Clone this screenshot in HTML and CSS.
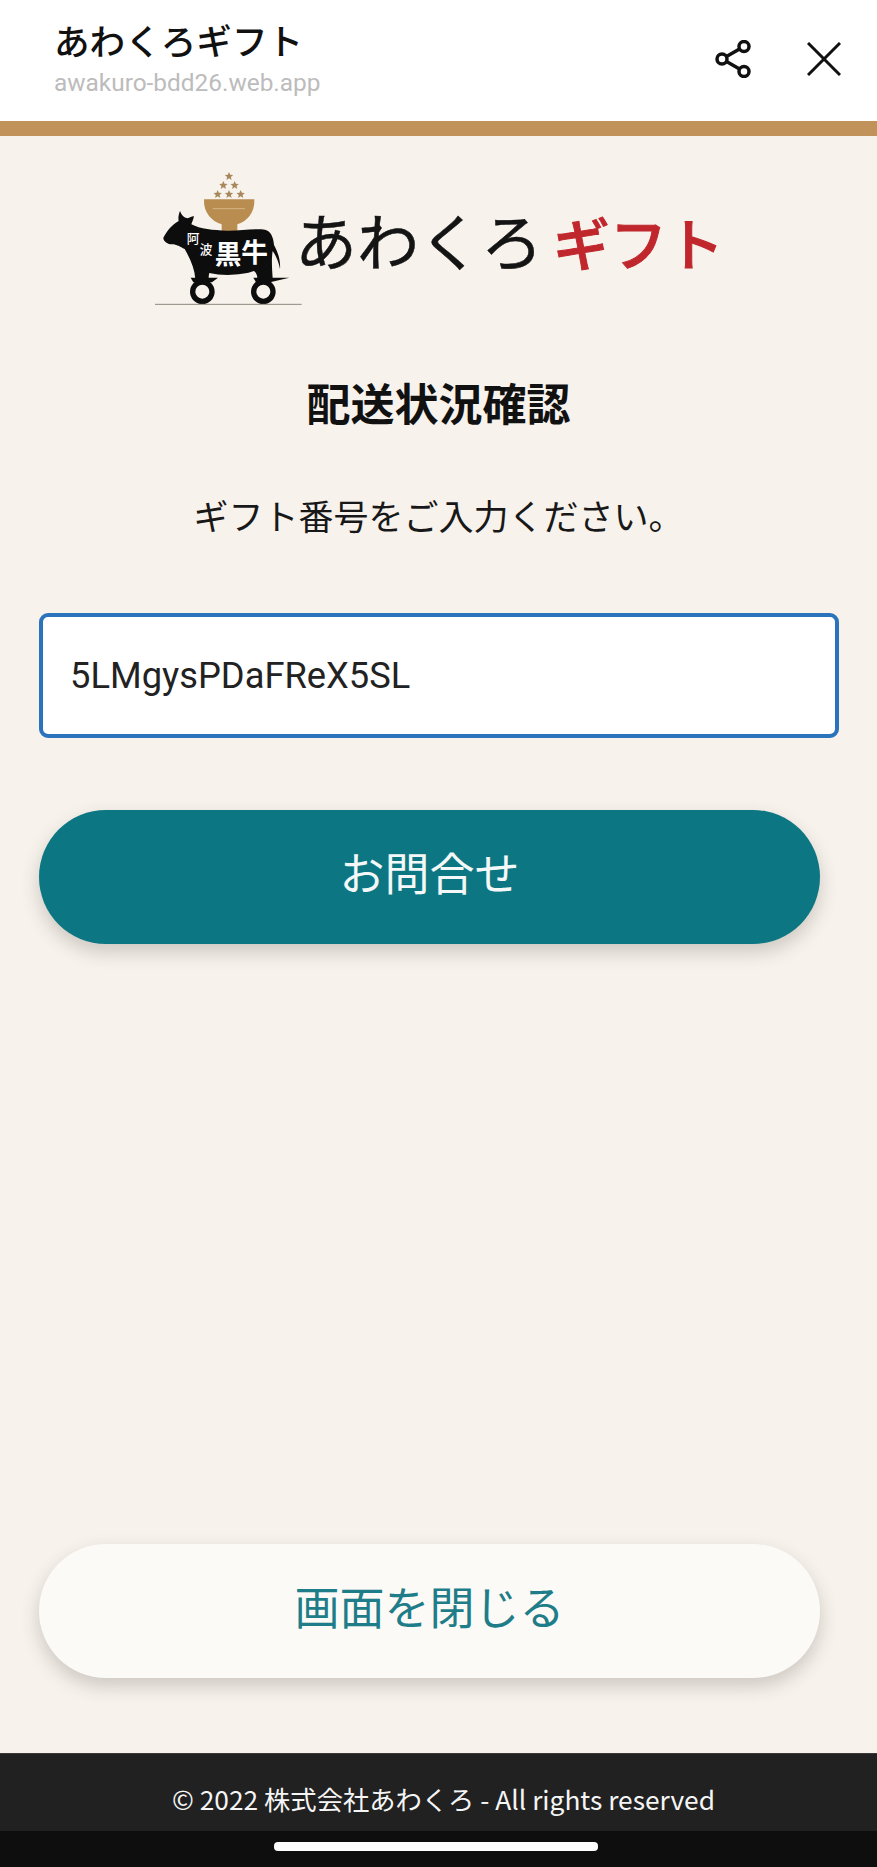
FILE: index.html
```html
<!DOCTYPE html>
<html lang="ja">
<head>
<meta charset="utf-8">
<title>あわくろギフト</title>
<link rel="stylesheet" href="styles.css">
</head>
<body>
<div class="app">
  <header class="topbar">
    <div class="topbar-titles">
      <div class="topbar-title">あわくろギフト</div>
      <div class="topbar-url">awakuro-bdd26.web.app</div>
    </div>
    <div class="topbar-actions">
      <svg class="icon-share" viewBox="0 0 36 38" aria-label="共有">
        <circle cx="7" cy="19" r="5"/>
        <circle cx="29" cy="6.500" r="5"/>
        <circle cx="29" cy="31.500" r="5"/>
        <path d="M11.500 16.500 24.500 9M11.500 21.500 24.500 29"/>
      </svg>
      <svg class="icon-close" viewBox="0 0 34 34" aria-label="閉じる">
        <path d="M1 1 33 33M33 1 1 33"/>
      </svg>
    </div>
  </header>
  <main class="content">
    <div class="logo">
      <svg class="logo-mark" viewBox="0 0 480 450" aria-label="阿波黒牛">
        <g class="star">
          <path d="M237 21l3.500 8.500 9 .7-6.900 5.800 2.200 8.800-7.800-4.800-7.800 4.800 2.200-8.800-6.900-5.800 9-.7z"/>
          <path d="M220 48l3.500 8.500 9 .7-6.900 5.800 2.200 8.800-7.800-4.800-7.800 4.800 2.200-8.800-6.900-5.800 9-.7z"/>
          <path d="M254 48l3.500 8.500 9 .7-6.900 5.800 2.200 8.800-7.800-4.800-7.800 4.800 2.200-8.800-6.900-5.800 9-.7z"/>
          <path d="M203 75l3.500 8.500 9 .7-6.900 5.800 2.200 8.800-7.800-4.800-7.800 4.800 2.200-8.800-6.900-5.800 9-.7z"/>
          <path d="M237 75l3.500 8.500 9 .7-6.900 5.800 2.200 8.800-7.800-4.800-7.800 4.800 2.200-8.800-6.900-5.800 9-.7z"/>
          <path d="M272 75l3.500 8.500 9 .7-6.900 5.800 2.200 8.800-7.800-4.800-7.800 4.800 2.200-8.800-6.900-5.800 9-.7z"/>
        </g>
        <path class="bowl" d="M162 103H313C315 145 290 170 262 178V200H215V178C187 170 160 145 162 103Z"/>
        <path class="bowl-line" d="M188 131H285"/>
        <path class="cow" d="M40 218C50 200 62 182 86 168C84 158 86 148 90 138C94 150 102 158 112 160C120 158 128 152 132 154C130 164 126 172 124 178C150 192 190 196 230 197C270 198 310 190 345 194C362 198 370 215 372 240C384 262 392 285 390 312C386 290 376 268 368 258C364 280 366 310 368 340H322C322 330 318 322 312 318C280 330 220 334 178 324C176 330 176 336 176 342H136C134 310 120 280 104 252C90 246 80 238 66 238C54 238 40 230 40 218Z"/>
        <path class="cow" d="M122 338H204L186 352H130ZM310 338H418L360 352H318Z"/>
        <circle class="wheel" cx="157" cy="380" r="29"/>
        <circle class="wheel" cx="340" cy="380" r="29"/>
        <path class="ground" d="M15 418H455"/>
        <text class="brand-small" x="110" y="235">阿</text>
        <text class="brand-small" x="149" y="267">波</text>
        <text class="brand-big" x="194" y="298">黒</text>
        <text class="brand-big" x="274" y="290">牛</text>
      </svg>
      <div class="logo-text"><span class="logo-black">あわくろ</span><span class="logo-red">ギフト</span></div>
    </div>
    <h1 class="heading">配送状況確認</h1>
    <p class="lead">ギフト番号をご入力ください。</p>
    <div class="field" role="textbox">5LMgysPDaFReX5SL</div>
    <button class="pill pill-primary" type="button">お問合せ</button>
    <button class="pill pill-light" type="button">画面を閉じる</button>
  </main>
  <footer class="footer">© 2022 株式会社あわくろ - All rights reserved</footer>
  <div class="navbar"><span class="home-pill"></span></div>
</div>
</body>
</html>
```
FILE: styles.css
```css
* { box-sizing: border-box; }
html, body { margin: 0; padding: 0; }
body {
  width: 877px;
  height: 1867px;
  overflow: hidden;
  background: #f7f2ec;
  font-family: "Noto Sans CJK JP", "Noto Sans", sans-serif;
}
.app {
  height: 1867px;
  display: flex;
  flex-direction: column;
}
.topbar {
  flex: none;
  height: 136px;
  background: #fff;
  border-bottom: 15px solid #c1935a;
  display: flex;
  justify-content: space-between;
  padding: 19px 36px 0 54px;
}
.topbar-title {
  font-size: 35.600px;
  line-height: 42px;
  font-weight: 500;
  color: #111;
}
.topbar-url {
  font-family: Roboto, sans-serif;
  font-size: 24.400px;
  line-height: 28px;
  color: #bcbcbc;
  margin-top: 8px;
}
.topbar-actions {
  display: flex;
  align-items: flex-start;
  gap: 56px;
}
.icon-share {
  width: 36px;
  height: 38px;
  margin-top: 21px;
  fill: none;
  stroke: #111;
  stroke-width: 3.500;
}
.icon-close {
  width: 34px;
  height: 34px;
  margin-top: 23px;
  fill: none;
  stroke: #111;
  stroke-width: 3;
}
.content {
  flex: 1;
  display: flex;
  flex-direction: column;
  padding: 29px 0 75px 39px;
}
.logo {
  display: flex;
  align-items: flex-start;
  height: 150px;
  margin-left: 111px;
}
.logo-mark { width: 160px; height: 150px; flex: none; }
.star { fill: #a8875a; }
.bowl { fill: #b98c50; }
.bowl-line { stroke: #e2c9a0; stroke-width: 2; fill: none; }
.cow { fill: #0d0d0d; }
.wheel { fill: none; stroke: #0d0d0d; stroke-width: 16; }
.ground { stroke: #8f897d; stroke-width: 3; }
.brand-small { fill: #fff; font-size: 38px; font-weight: 500; }
.brand-big { fill: #fff; font-size: 80px; font-weight: 700; }
.logo-text {
  display: flex;
  align-items: baseline;
  margin: 32px 0 0 -15px;
  line-height: 84px;
}
.logo-black {
  font-size: 62px;
  color: #141414;
  width: 260px;
  -webkit-text-stroke: .5px #141414;
}
.logo-red {
  font-size: 57px;
  font-weight: 500;
  color: #c0272d;
  margin-left: -2px;
  -webkit-text-stroke: 1px #c0272d;
}
.heading {
  margin: 55px 0 0 -39px;
  text-align: center;
  font-size: 44px;
  line-height: 64px;
  font-weight: 700;
  color: #111;
}
.lead {
  margin: 55px 0 0 -39px;
  text-align: center;
  font-size: 35px;
  line-height: 52px;
  color: #181818;
}
.field {
  width: 800px;
  height: 125px;
  margin-top: 72px;
  padding: 0 0 1px 27px;
  display: flex;
  align-items: center;
  background: #fff;
  border: 4px solid #2b74bb;
  border-radius: 9px;
  font-family: Roboto, sans-serif;
  font-size: 36.300px;
  color: #222;
}
.pill {
  flex: none;
  width: 781px;
  height: 134px;
  border: 0;
  border-radius: 67px;
  font-family: inherit;
  font-size: 45px;
  padding: 0 0 12px;
  box-shadow: 0 8px 18px rgba(60, 50, 40, .22);
}
.pill-primary {
  margin-top: 72px;
  background: #0c7783;
  color: #f4f8f8;
}
.pill-light {
  margin-top: auto;
  background: #fbfaf7;
  color: #1e7d88;
}
.footer {
  flex: none;
  height: 78px;
  padding: 14px 0 0 10px;
  background: #212121;
  border-top: 1px solid #3a3a3a;
  color: #f5f5f5;
  font-size: 26.300px;
  line-height: 62px;
  text-align: center;
}
.navbar {
  flex: none;
  height: 36px;
  background: #0e0e0e;
  padding: 11px 0 0 274px;
}
.home-pill {
  display: block;
  width: 324px;
  height: 9px;
  background: #fff;
  border-radius: 4px;
}
```
